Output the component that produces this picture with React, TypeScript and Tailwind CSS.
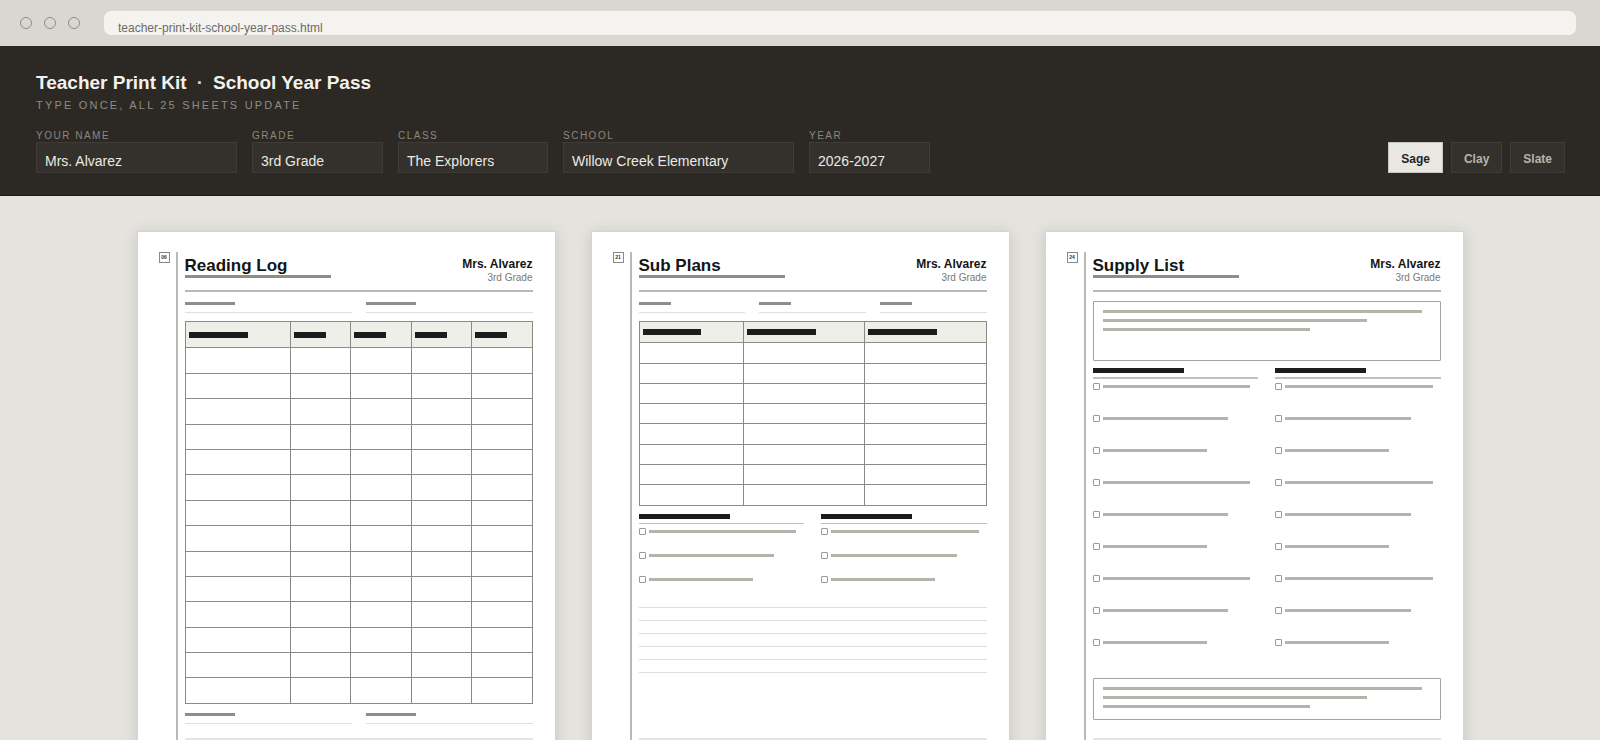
import React from "react";

const fields = [
  { label: "YOUR NAME", value: "Mrs. Alvarez", w: "w-[201px]" },
  { label: "GRADE", value: "3rd Grade", w: "w-[131px]" },
  { label: "CLASS", value: "The Explorers", w: "w-[150px]" },
  { label: "SCHOOL", value: "Willow Creek Elementary", w: "w-[231px]" },
  { label: "YEAR", value: "2026-2027", w: "w-[121px]" },
];

const themes = ["Sage", "Clay", "Slate"];

function SheetHeader({ title }: { title: string }) {
  return (
    <div className="flex justify-between items-start pb-[6px] border-b-2 border-[#b9b9b4]">
      <div className="w-[146px]">
        <div className="pt-[4px] text-[17px] leading-[20px] font-bold text-[#151515] whitespace-nowrap">{title}</div>
        <div className="-mt-[1px] h-[3px] bg-[#8e8e88]" />
      </div>
      <div className="pt-[5px] text-right">
        <div className="text-[12px] leading-[14px] font-bold text-[#151515]">Mrs. Alvarez</div>
        <div className="mt-[1px] text-[10px] leading-[12px] text-[#7a7a75]">3rd Grade</div>
      </div>
    </div>
  );
}

function FieldLine() {
  return (
    <div className="flex-1">
      <div className="h-[3px] w-[30%] bg-[#8e8e89]" />
      <div className="mt-[7px] h-px bg-[#e1e1dc]" />
    </div>
  );
}

function Fields({ n, className = "" }: { n: number; className?: string }) {
  return (
    <div className={`flex gap-[14px] ${className}`}>
      {Array.from({ length: n }).map((_, i) => (
        <FieldLine key={i} />
      ))}
    </div>
  );
}

function GridTable({ cols, rows, rowH }: { cols: string[]; rows: number; rowH: string }) {
  const cells = (header: boolean) =>
    cols.map((w, i) => (
      <div
        key={i}
        className={`${w} h-full flex items-center px-[3px] ${i > 0 ? "border-l border-[#8b8b86]" : ""}`}
      >
        {header && <div className="h-[6px] w-[60%] bg-[#1c1c1c]" />}
      </div>
    ));
  return (
    <div className="border border-[#8b8b86]">
      <div className={`flex ${rowH} bg-[#efefea]`}>{cells(true)}</div>
      {Array.from({ length: rows }).map((_, r) => (
        <div key={r} className={`flex ${rowH} border-t border-[#8b8b86]`}>
          {cells(false)}
        </div>
      ))}
    </div>
  );
}

const itemWidths = ["w-[95%]", "w-[81%]", "w-[67%]"];

function CheckColumn({ count, rowGap }: { count: number; rowGap: string }) {
  return (
    <div className="flex-1">
      <div className="h-[5px] w-[91px] bg-[#1c1c1c]" />
      <div className="mt-[4px] h-[1.5px] bg-[#c2c2bd]" />
      <div className={`mt-[4px] flex flex-col ${rowGap}`}>
        {Array.from({ length: count }).map((_, i) => (
          <div key={i} className="flex items-center gap-[3px] h-[7px]">
            <div className="w-[7px] h-[7px] shrink-0 border border-[#9a9a95] rounded-[1px]" />
            <div className="flex-1">
              <div className={`h-[3px] ${itemWidths[i % 3]} bg-[#b4b4ad]`} />
            </div>
          </div>
        ))}
      </div>
    </div>
  );
}

function NoteBox({ className = "" }: { className?: string }) {
  return (
    <div className={`border-[1.5px] border-[#a3a39e] rounded-[1px] pl-[9px] pr-[18px] ${className}`}>
      <div className="flex flex-col gap-[6px]">
        <div className="h-[3px] w-full bg-[#b4b4ad]" />
        <div className="h-[3px] w-[83%] bg-[#b4b4ad]" />
        <div className="h-[3px] w-[65%] bg-[#b4b4ad]" />
      </div>
    </div>
  );
}

function Sheet({ num, children }: { num: string; children: React.ReactNode }) {
  return (
    <div className="w-[419px] h-[540px] shrink-0 bg-white border border-[#d6d4ce] shadow-[0_2px_14px_rgba(0,0,0,0.13)] flex pt-[20px] pl-[21px] pr-[22px] pb-[30px]">
      <div className="w-[11px] h-[11px] mr-[6px] border border-[#8a8a85] flex items-center justify-center text-[5px] leading-none font-bold text-[#333]">
        {num}
      </div>
      <div className="flex-1 border-l-2 border-[#b9b9b4] pl-[7px] flex flex-col">
        {children}
        <div className="mt-auto h-[2px] bg-[#e6e6e1]" />
      </div>
    </div>
  );
}

export default function App() {
  return (
    <div className="w-[1600px] h-[740px] overflow-hidden bg-[#e5e3de] font-['Liberation_Sans',Arial,sans-serif]">
      {/* browser chrome */}
      <div className="h-[46px] bg-[#d9d7d2] flex items-center pl-[20px] pr-[24px]">
        <div className="flex gap-[12px]">
          <div className="w-[12px] h-[12px] rounded-full border border-[#8e8d89]" />
          <div className="w-[12px] h-[12px] rounded-full border border-[#8e8d89]" />
          <div className="w-[12px] h-[12px] rounded-full border border-[#8e8d89]" />
        </div>
        <div className="ml-[24px] flex-1 h-[24px] rounded-[7px] bg-[#f4f3ef] pl-[14px] pt-[10px] text-[12px] leading-[14px] text-[#6c6b67]">
          teacher-print-kit-school-year-pass.html
        </div>
      </div>

      {/* toolbar */}
      <div className="h-[150px] bg-[#2c2925] border-b border-[#1a1816] pl-[36px] pr-[35px] pt-[26px]">
        <div className="text-[19px] leading-[22px] font-bold text-[#f3f1ec] flex">
          <span>Teacher Print Kit</span>
          <span className="mx-[10px] text-[#d8d4cc]">·</span>
          <span>School Year Pass</span>
        </div>
        <div className="mt-[4px] text-[11px] leading-[14px] tracking-[0.2em] text-[#8f8b83]">
          TYPE ONCE, ALL 25 SHEETS UPDATE
        </div>
        <div className="mt-[18px] flex justify-between items-end">
          <div className="flex gap-[15px]">
            {fields.map((f) => (
              <div key={f.label} className={f.w}>
                <div className="text-[10px] leading-[12px] tracking-[0.15em] text-[#8c877e]">{f.label}</div>
                <div className="h-[31px] bg-[#34312c] border border-[#3f3c37] pl-[8px] pt-[10px] text-[14px] leading-[16px] text-[#ece9e3] whitespace-nowrap">
                  {f.value}
                </div>
              </div>
            ))}
          </div>
          <div className="flex gap-[8px]">
            {themes.map((t, i) => (
              <button
                key={t}
                className={`h-[31px] px-[12px] pt-[2px] text-[12px] font-bold border ${
                  i === 0
                    ? "bg-[#e9e7e2] text-[#26231f] border-[#c9c6bf]"
                    : "bg-[#34312c] text-[#b8b4ab] border-[#3f3c37]"
                }`}
              >
                {t}
              </button>
            ))}
          </div>
        </div>
      </div>

      {/* sheets */}
      <div className="flex justify-center gap-[35px] pt-[35px]">
        <Sheet num="06">
          <SheetHeader title="Reading Log" />
          <Fields n={2} className="mt-[10px]" />
          <div className="mt-[8px]">
            <GridTable
              cols={["w-[30.2%]", "w-[17.45%]", "w-[17.45%]", "w-[17.45%]", "w-[17.45%]"]}
              rows={14}
              rowH="h-[25.4px]"
            />
          </div>
          <Fields n={2} className="mt-[9px]" />
        </Sheet>

        <Sheet num="21">
          <SheetHeader title="Sub Plans" />
          <Fields n={3} className="mt-[10px]" />
          <div className="mt-[8px]">
            <GridTable cols={["w-[30%]", "w-[35%]", "w-[35%]"]} rows={8} rowH="h-[20.3px]" />
          </div>
          <div className="mt-[8px] flex gap-[17px]">
            <CheckColumn count={3} rowGap="gap-[17px]" />
            <CheckColumn count={3} rowGap="gap-[17px]" />
          </div>
          <div className="mt-[24px] flex flex-col gap-[12px]">
            {Array.from({ length: 6 }).map((_, i) => (
              <div key={i} className="h-px bg-[#dfdfda]" />
            ))}
          </div>
        </Sheet>

        <Sheet num="24">
          <SheetHeader title="Supply List" />
          <NoteBox className="mt-[9px] h-[60px] pt-[8px]" />
          <div className="mt-[7px] flex gap-[17px]">
            <CheckColumn count={9} rowGap="gap-[25px]" />
            <CheckColumn count={9} rowGap="gap-[25px]" />
          </div>
          <NoteBox className="mt-[32px] h-[42px] pt-[8px]" />
        </Sheet>
      </div>
    </div>
  );
}
